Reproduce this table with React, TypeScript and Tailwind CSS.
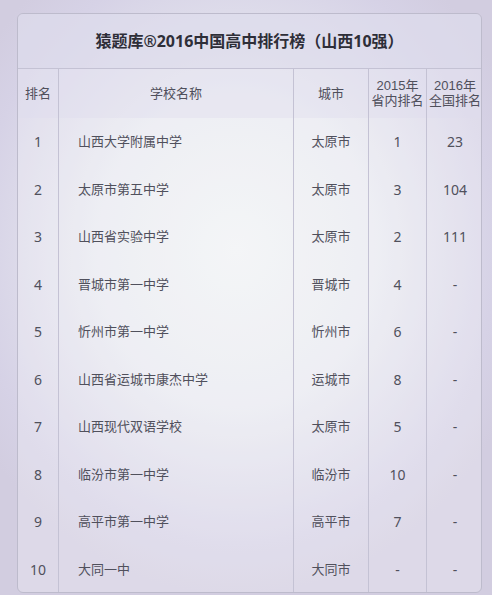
import React from "react";

type Row = {
  rank: string;
  school: string;
  city: string;
  prov2015: string;
  nat2016: string;
};

const rows: Row[] = [
  { rank: "1", school: "山西大学附属中学", city: "太原市", prov2015: "1", nat2016: "23" },
  { rank: "2", school: "太原市第五中学", city: "太原市", prov2015: "3", nat2016: "104" },
  { rank: "3", school: "山西省实验中学", city: "太原市", prov2015: "2", nat2016: "111" },
  { rank: "4", school: "晋城市第一中学", city: "晋城市", prov2015: "4", nat2016: "-" },
  { rank: "5", school: "忻州市第一中学", city: "忻州市", prov2015: "6", nat2016: "-" },
  { rank: "6", school: "山西省运城市康杰中学", city: "运城市", prov2015: "8", nat2016: "-" },
  { rank: "7", school: "山西现代双语学校", city: "太原市", prov2015: "5", nat2016: "-" },
  { rank: "8", school: "临汾市第一中学", city: "临汾市", prov2015: "10", nat2016: "-" },
  { rank: "9", school: "高平市第一中学", city: "高平市", prov2015: "7", nat2016: "-" },
  { rank: "10", school: "大同一中", city: "大同市", prov2015: "-", nat2016: "-" },
];

const cols = "grid grid-cols-[40px_235px_75px_58px_57px]";
const cell = "flex items-center border-l border-[#c4c2d4] first:border-l-0";
const twoLine = "block h-[14.5px] font-['Liberation_Sans','Noto_Sans_CJK_SC',sans-serif]";

export default function App() {
  return (
    <div
      className="h-[595px] w-[492px] overflow-hidden bg-[radial-gradient(ellipse_62%_58%_at_48%_42%,#f0f2f4_0%,#e8e9f0_45%,#d6d2e6_85%,#d2cde0_100%)] pt-[13px]"
      style={{ fontFamily: '"Noto Sans", "Noto Sans CJK SC", sans-serif' }}
    >
      <div className="ml-[17px] w-[465px] h-[580px] overflow-hidden rounded-[6px] border border-[#bdbbcc] bg-white/25 text-[#50505c]">
        <div className="flex h-[55px] items-center justify-center border-b border-[#c4c2d4] bg-[#d9d7ea]/60 text-[16px] font-bold text-[#2e2e38]">
          猿题库®2016中国高中排行榜（山西10强）
        </div>
        <div className={`${cols} h-[49px] bg-[#dedcee]/40 text-[13px] leading-[14.5px]`}>
          <div className={`${cell} justify-center`}>排名</div>
          <div className={`${cell} justify-center`}>学校名称</div>
          <div className={`${cell} justify-center`}>城市</div>
          <div className={`${cell} flex-col justify-center text-center`}>
            <span className={twoLine}>2015年</span>
            <span className={twoLine}>省内排名</span>
          </div>
          <div className={`${cell} flex-col justify-center text-center`}>
            <span className={twoLine}>2016年</span>
            <span className={twoLine}>全国排名</span>
          </div>
        </div>
        {rows.map((r) => (
          <div key={r.rank} className={`${cols} h-[47.5px] text-[13px]`}>
            <div className={`${cell} justify-center text-[14px]`}>{r.rank}</div>
            <div className={`${cell} pl-[19px]`}>{r.school}</div>
            <div className={`${cell} justify-center`}>{r.city}</div>
            <div className={`${cell} justify-center text-[14px]`}>{r.prov2015}</div>
            <div className={`${cell} justify-center text-[14px]`}>{r.nat2016}</div>
          </div>
        ))}
      </div>
    </div>
  );
}
